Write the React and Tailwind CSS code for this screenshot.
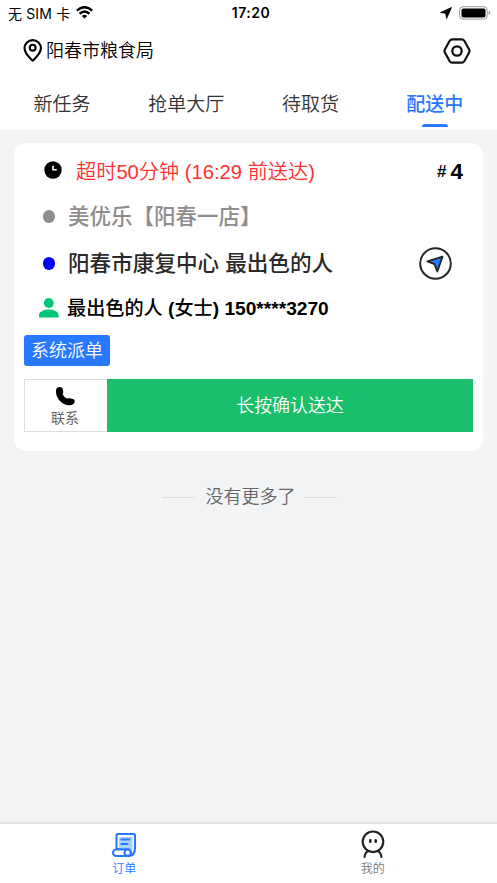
import React from 'react';

function StatusBar() {
  return (
    <div className="h-[25px] px-[8px] grid grid-cols-3 items-center">
      <div className="flex items-center">
        <span className="text-[14px] leading-[25px] tracking-[0.15px] font-['Inter','Noto_Sans_CJK_SC',sans-serif]">
          无 SIM 卡
        </span>
        <svg className="ml-[6px] mb-[2px] w-[17px] h-[13px]" viewBox="0 0 17 13" fill="none" stroke="#000" strokeWidth="2.5">
          <path d="M.8 4.6 Q8.5 -2.2 16.2 4.6" />
          <path d="M3.6 7.7 Q8.5 3.3 13.4 7.7" />
          <path d="M8.5 12.6 L5.8 9.9 Q8.5 7.7 11.2 9.9 Z" fill="#000" stroke="none" />
        </svg>
      </div>
      <span className="pl-[5px] text-center text-[14px] leading-[26px] font-semibold tracking-[0.5px] font-['Inter',sans-serif]">
        17:20
      </span>
      <div className="flex items-center justify-end -mr-[2px]">
        <svg className="w-[12px] h-[12px]" viewBox="0 0 12 12">
          <path d="M11.5 0.5 L0.5 5.6 L5.7 6.3 L6.6 11.5 Z" fill="#000" stroke="#000" strokeWidth="0.8" strokeLinejoin="round" />
        </svg>
        <svg className="ml-[7px] w-[32px] h-[14px]" viewBox="0 0 32 14">
          <rect x="0.6" y="0.7" width="27.6" height="12.4" rx="3.4" fill="none" stroke="#999" />
          <rect x="2.5" y="2.5" width="24" height="9" rx="1.8" fill="#000" />
          <path d="M29.7 4.7 Q31.2 5.3 31.2 6.9 Q31.2 8.5 29.7 9.1 Z" fill="#999" />
        </svg>
      </div>
    </div>
  );
}

function Header() {
  return (
    <div className="h-[51px] pl-[23px] pr-[26px] flex items-center justify-between">
      <div className="flex items-center">
        <svg className="w-[20px] h-[24px]" viewBox="0 0 20 24" fill="none" stroke="#000" strokeWidth="2.1">
          <path d="M9.7 21.8 C7 19 1.5 14.5 1.5 9.3 A8.2 8.2 0 0 1 17.9 9.3 C17.9 14.5 12.4 19 9.7 21.8 Z" strokeLinejoin="round" />
          <circle cx="9.7" cy="8.7" r="2.9" />
        </svg>
        <span className="ml-[3px] pt-[1px] text-[18px] leading-[26px] font-[350]">阳春市粮食局</span>
      </div>
      <svg className="w-[28px] h-[26px]" viewBox="0 0 28 26" fill="none" stroke="#111" strokeWidth="2.2">
        <path
          d="M9.3 1.3 H18.7 Q20.4 1.3 21.3 2.8 L26 11.2 Q27 13 26 14.8 L21.3 23.2 Q20.4 24.7 18.7 24.7 H9.3 Q7.6 24.7 6.7 23.2 L2 14.8 Q1 13 2 11.2 L6.7 2.8 Q7.6 1.3 9.3 1.3 Z"
          strokeLinejoin="round"
        />
        <circle cx="14" cy="13" r="4.7" strokeWidth="2.3" />
      </svg>
    </div>
  );
}

function Tabs() {
  return (
    <nav className="h-[54px] grid grid-cols-4 text-[19px] text-[#323233] font-[350]">
      <span className="text-center leading-[58px]">新任务</span>
      <span className="text-center leading-[58px]">抢单大厅</span>
      <span className="text-center leading-[58px]">待取货</span>
      <span className="flex flex-col items-center text-[#2879ff] font-medium">
        <span className="h-[48px] leading-[58px]">配送中</span>
        <span className="w-[26px] h-[3px] rounded-t-[3px] bg-[#2879ff]" />
      </span>
    </nav>
  );
}

function OrderCard() {
  return (
    <section className="mx-[14px] mt-[13px] h-[308px] px-[10px] pt-[7px] rounded-[12px] bg-white">
      <div className="h-[44px] pl-[20px] pr-[10px] flex items-center">
        <svg className="w-[18px] h-[18px] mb-[4px]" viewBox="0 0 18 18">
          <circle cx="9" cy="9" r="8.7" fill="#000" />
          <path d="M9 4.8 V8.7 H12.8" fill="none" stroke="#fff" strokeWidth="1.6" />
        </svg>
        <span className="ml-[14px] text-[20.2px] leading-[44px] text-[#ff3030] font-[350]">超时50分钟 (16:29 前送达)</span>
        <span className="ml-auto flex items-center font-bold leading-[44px]">
          <span className="text-[17px]">#</span>
          <span className="ml-[4px] text-[22.5px]">4</span>
        </span>
      </div>
      <div className="h-[44px] pl-[19px] flex items-center">
        <span className="w-[12px] h-[13px] rounded-full bg-[#8f8d8d]" />
        <span className="ml-[13px] pt-[1px] text-[21.5px] leading-[44px] font-medium text-[#8f8d8d]">美优乐【阳春一店】</span>
      </div>
      <div className="h-[50px] pl-[19px] pr-[21px] flex items-center">
        <span className="w-[12px] h-[13px] rounded-full bg-[#0000ff]" />
        <span className="ml-[13px] pt-[2px] text-[21.6px] leading-[50px] font-medium text-[#2a2a2a]">阳春市康复中心 最出色的人</span>
        <svg className="ml-auto w-[33px] h-[33px]" viewBox="0 0 33 33" stroke="#262626">
          <circle cx="16.5" cy="16.5" r="15.3" fill="none" strokeWidth="2" />
          <path d="M23.5 9.7 L8.3 14.3 L15.6 17.2 L18.3 24.5 Z" fill="#2879ff" strokeWidth="1.9" strokeLinejoin="round" />
        </svg>
      </div>
      <div className="h-[40px] pl-[15px] flex items-center">
        <svg className="w-[20px] h-[20px]" viewBox="0 0 20 20" fill="#00c777">
          <circle cx="9.8" cy="5" r="4.9" />
          <path d="M0 19.5 V17 C0 13.6 5.5 11.6 9.8 11.6 S19.6 13.6 19.6 17 V19.5 Z" />
        </svg>
        <span className="ml-[8px] text-[19.15px] leading-[39px] font-bold">
          <span className="font-medium">最出色的人</span> (<span className="font-medium">女士</span>) 150****3270
        </span>
      </div>
      <div className="mt-[7px] w-[86px] h-[31px] rounded-[3px] bg-[#2879ff] text-center text-[18px] leading-[33px] text-white font-[350]">
        系统派单
      </div>
      <div className="mt-[13px] h-[53px] flex">
        <button className="w-[83px] border border-r-0 border-[#dcdee0] flex flex-col items-center">
          <svg className="mt-[7px] mr-[2px] w-[19px] h-[19px]" viewBox="0 0 19 19">
            <path
              d="M1 1 Q3.6 -.6 5.7 .5 Q7.2 1.7 7.2 4.6 Q7.2 6.5 6.7 7.4 Q8.2 10.2 10.9 11.6 Q12.5 10.9 15 11.4 Q18.4 11.9 18.7 13.5 Q18.9 16.3 16.8 17.6 C12.8 19.6 6.7 17.6 3 13 C0 9 -1 3.1 1 1 Z"
              fill="#000"
            />
          </svg>
          <span className="mt-[3px] mr-[2px] text-[14px] leading-[18px] text-[#646566]">联系</span>
        </button>
        <button className="flex-1 bg-[#1abf6b] text-[17.9px] leading-[55px] text-white font-[350]">长按确认送达</button>
      </div>
    </section>
  );
}

function BottomNav() {
  return (
    <nav className="mt-auto h-[61px] pt-[8px] border-t-2 border-[#dfe0e1] bg-white grid grid-cols-2 text-[12px] font-[350]">
      <div className="flex flex-col items-center text-[#2879ff]">
        <svg className="w-[26px] h-[26px]" viewBox="0 0 26 26" fill="none" stroke="#2879ff" strokeWidth="2.1">
          <path d="M5.5 17 V3.5 Q5.5 2 7 2 H22.5 Q24 2 24 3.5 V16 Q24 24 17.5 24 V17 Z" fill="#fff" />
          <path d="M8 5 H21.5 V16 Q21.5 20 20 20.5 L17.5 16.5 H8 Z" fill="#a9d0ff" stroke="none" />
          <path d="M10.5 7.5 H18.5 M10.5 12 H16.5" strokeLinecap="round" />
          <rect x="2" y="17.5" width="18" height="6.5" rx="3.25" fill="#fff" />
          <circle cx="16.7" cy="20.7" r="3.2" fill="#fff" />
        </svg>
        <span className="mt-[2px] leading-[18px]">订单</span>
      </div>
      <div className="flex flex-col items-center text-[#777]">
        <svg className="w-[26px] h-[28px] -mt-[2px]" viewBox="0 0 26 28" fill="none" stroke="#222" strokeWidth="2.1">
          <circle cx="13" cy="11.8" r="10.3" />
          <path d="M10.3 10.4 V11.7 M15.7 10.4 V11.7" strokeWidth="2.6" strokeLinecap="round" />
          <path d="M8.4 21 Q5 22.3 4.6 27 M17.6 21 Q21 22.3 21.4 27" strokeLinecap="round" />
        </svg>
        <span className="mt-[2px] leading-[18px]">我的</span>
      </div>
    </nav>
  );
}

export default function App() {
  return (
    <div className="w-full h-screen overflow-hidden flex flex-col bg-[#f3f4f6] text-black whitespace-nowrap font-['Liberation_Sans','Noto_Sans_CJK_SC',sans-serif]">
      <header className="h-[130px] bg-white">
        <StatusBar />
        <Header />
        <Tabs />
      </header>
      <OrderCard />
      <div className="mt-[31px] pl-[1px] flex items-center justify-center text-[18px] leading-[30px] text-[#646566] font-[350]">
        <span className="w-[33px] h-px mr-[11px] bg-[#dcdee0]" />
        没有更多了
        <span className="w-[33px] h-px ml-[8px] bg-[#dcdee0]" />
      </div>
      <BottomNav />
    </div>
  );
}
